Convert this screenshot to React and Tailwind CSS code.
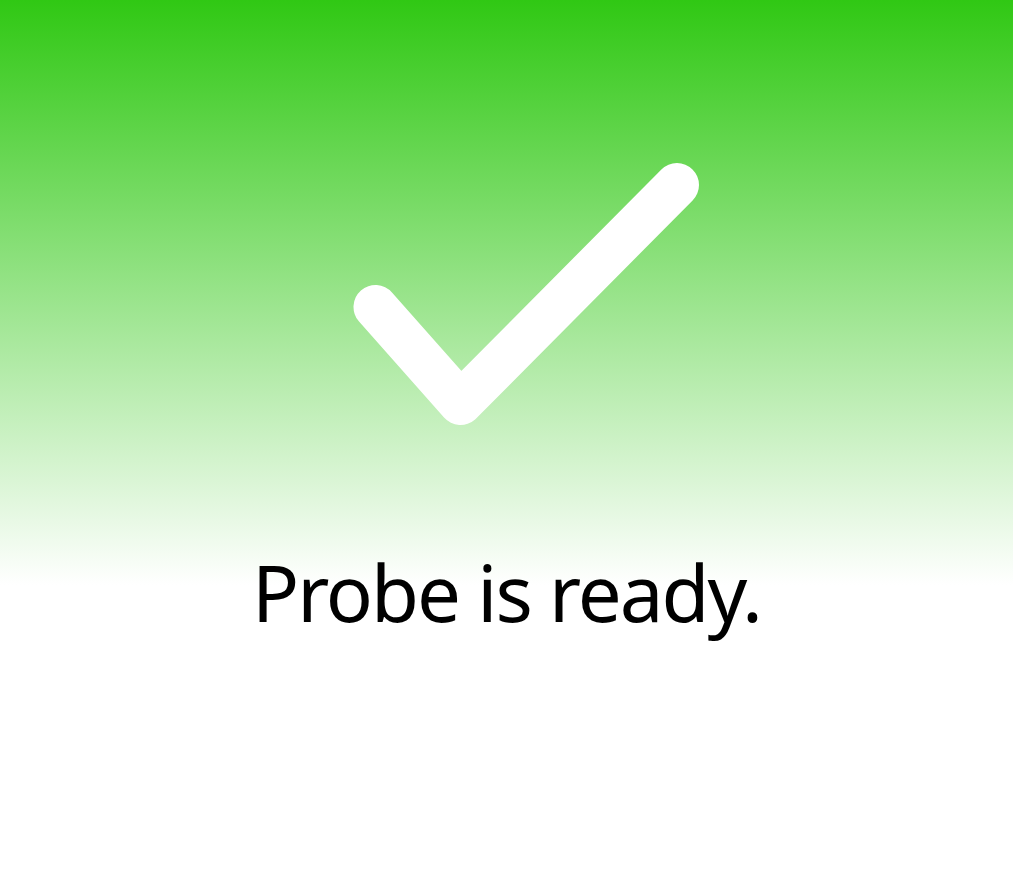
const App = () => {
  return (
    <div className="flex flex-col items-center h-[872px] w-full bg-[linear-gradient(to_bottom,#30c814_0px,#ffffff_585px)] font-['Noto_Sans',sans-serif]">
      <svg className="mt-[140px] w-[400px] h-[300px]" viewBox="0 0 400 300" fill="none">
        <polyline
          points="68.5,167 153.5,263 370,45"
          stroke="#ffffff"
          strokeWidth="44"
          strokeLinecap="round"
          strokeLinejoin="round"
        />
      </svg>
      <p className="mt-[113px] text-[78px] leading-none tracking-[-2px] text-black">Probe is ready.</p>
    </div>
  );
};

export default App;
